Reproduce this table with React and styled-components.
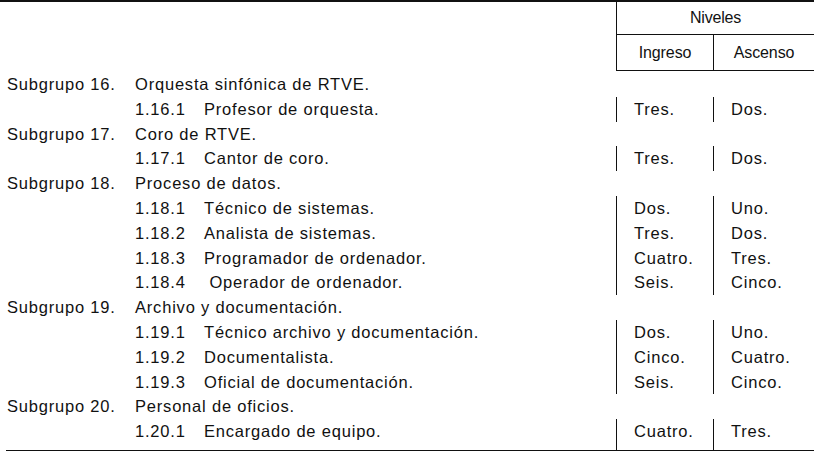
import React from 'react'
import styled, { createGlobalStyle } from 'styled-components'

const GlobalStyle = createGlobalStyle`
  html, body {
    margin: 0;
    padding: 0;
    background: #ffffff;
  }
  body {
    font-family: "Liberation Sans", Arial, sans-serif;
    color: #111111;
  }
`

const Sheet = styled.div`
  width: 814px;
  font-size: 16.5px;
  letter-spacing: 0.8px;
`

const Head = styled.div`
  display: grid;
  grid-template-columns: 616px 1fr;
  border-top: 2px solid #111;
`

const HeadLevels = styled.div`
  border-left: 1px solid #111;
  border-bottom: 1px solid #111;
  display: flex;
  flex-direction: column;
`

const LevelsTitle = styled.div`
  height: 32px;
  border-bottom: 1px solid #111;
  display: flex;
  align-items: center;
  justify-content: center;
  font-size: 16px;
  letter-spacing: -0.2px;
`

const LevelsCols = styled.div`
  display: grid;
  grid-template-columns: 96px 1fr;
  height: 35px;
`

const LevelsCol = styled.div`
  display: flex;
  align-items: center;
  justify-content: center;
  font-size: 16px;
  letter-spacing: -0.1px;
  border-left: ${(p) => (p.$divided ? '1px solid #111' : 'none')};
`

const Body = styled.div`
  margin-left: 6px;
  padding-top: 1px;
  border-bottom: 1px solid #111;
`

const Row = styled.div`
  display: grid;
  grid-template-columns: 610px 97px 1fr;
  line-height: 24.8px;
`

const Lead = styled.div`
  display: grid;
  grid-template-columns: 128px 69px 1fr;
  padding-left: 1px;
  white-space: pre;
`

const Level = styled.div`
  padding-left: 17px;
  padding-bottom: ${(p) => (p.$tail ? '6px' : '0')};
  border-left: ${(p) => (p.$ruled ? '1px solid #111' : 'none')};
`

const data = [
  {
    no: '16',
    title: 'Orquesta sinfónica de RTVE.',
    items: [['1.16.1', 'Profesor de orquesta.', 'Tres.', 'Dos.']],
  },
  {
    no: '17',
    title: 'Coro de RTVE.',
    items: [['1.17.1', 'Cantor de coro.', 'Tres.', 'Dos.']],
  },
  {
    no: '18',
    title: 'Proceso de datos.',
    items: [
      ['1.18.1', 'Técnico de sistemas.', 'Dos.', 'Uno.'],
      ['1.18.2', 'Analista de sistemas.', 'Tres.', 'Dos.'],
      ['1.18.3', 'Programador de ordenador.', 'Cuatro.', 'Tres.'],
      ['1.18.4', ' Operador de ordenador.', 'Seis.', 'Cinco.'],
    ],
  },
  {
    no: '19',
    title: 'Archivo y documentación.',
    items: [
      ['1.19.1', 'Técnico archivo y documentación.', 'Dos.', 'Uno.'],
      ['1.19.2', 'Documentalista.', 'Cinco.', 'Cuatro.'],
      ['1.19.3', 'Oficial de documentación.', 'Seis.', 'Cinco.'],
    ],
  },
  {
    no: '20',
    title: 'Personal de oficios.',
    items: [['1.20.1', 'Encargado de equipo.', 'Cuatro.', 'Tres.']],
  },
]

const App = () => {
  return (
    <>
      <GlobalStyle />
      <Sheet>
        <Head>
          <div />
          <HeadLevels>
            <LevelsTitle>Niveles</LevelsTitle>
            <LevelsCols>
              <LevelsCol>Ingreso</LevelsCol>
              <LevelsCol $divided>Ascenso</LevelsCol>
            </LevelsCols>
          </HeadLevels>
        </Head>
        <Body>
          {data.map((group, gi) => (
            <React.Fragment key={group.no}>
              <Row>
                <Lead>
                  <span>Subgrupo {group.no}.</span>
                  <span style={{ gridColumn: '2 / 4' }}>{group.title}</span>
                </Lead>
                <Level />
                <Level />
              </Row>
              {group.items.map((item, ii) => {
                const tail =
                  gi === data.length - 1 && ii === group.items.length - 1
                return (
                  <Row key={item[0]}>
                    <Lead>
                      <span />
                      <span>{item[0]}</span>
                      <span>{item[1]}</span>
                    </Lead>
                    <Level $ruled $tail={tail}>
                      {item[2]}
                    </Level>
                    <Level $ruled $tail={tail}>
                      {item[3]}
                    </Level>
                  </Row>
                )
              })}
            </React.Fragment>
          ))}
        </Body>
      </Sheet>
    </>
  )
}

export default App
